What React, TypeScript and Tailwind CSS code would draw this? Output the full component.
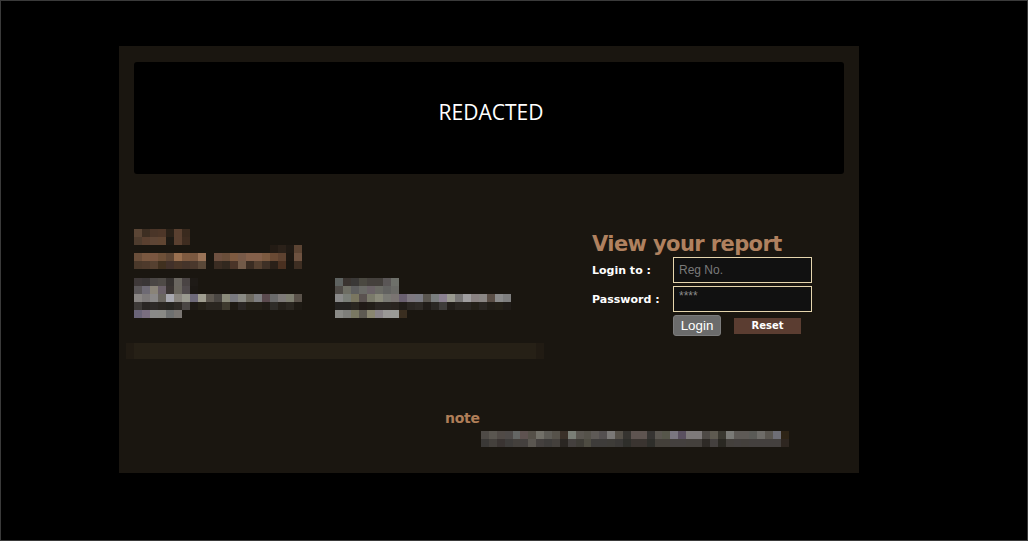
import React from "react";

type Row = string[];

function PixelBlock({ rows, cellW = 8, className = "" }: { rows: Row[]; cellW?: number; className?: string }) {
  return (
    <div className={`flex flex-col ${className}`}>
      {rows.map((row, i) => (
        <div key={i} className="flex h-[8px]">
          {row.map((c, j) => (
            <div key={j} className="h-[8px] shrink-0" style={{ width: cellW, background: c || "transparent" }} />
          ))}
        </div>
      ))}
    </div>
  );
}

const blockA: Row[] = [
  ["#5a4535", "#3d2e22", "#4a3528", "#4d3628", "#2a2118", "#5a4030", "#3a2a1e"],
  ["#4e3c2e", "#5a4030", "#5e4535", "#604532", "#1e1a14", "#5a4030", "#3e2c20"],
];

const t = "";
const blockB: Row[] = [
  [t, t, t, t, t, t, t, t, t, t, t, t, t, t, t, t, t, "#231b14", "#2b2119", "#201a14", "#5c4433"],
  ["#6a4e3a", "#7a5840", "#7a5640", "#6e5038", "#5e4634", "#9a7050", "#7e5a40", "#7a5840", "#9a7458", t,
    "#6e5040", "#6a4e3a", "#7e5a40", "#785a48", "#84604a", "#84604a", "#7c5a40", "#6a4a34", "#5e4230", "#1e1812", "#6e5240"],
  ["#4a382a", "#4e3a2c", "#554030", "#40301f", "#42312a", "#4a3628", "#45342a", "#4a382c", "#5a4838", t,
    "#3a2c22", "#32281f", "#4a3428", "#725a48", "#3a2c22", "#554030", "#3e3026", "#2a2018", "#4a3020", t, "#3e2e22"],
];

const blockC: Row[] = [
  ["#3e3838", "#3a3636", "#4a4644", "#4e4a46", "#363230", "#6a6660", "#4a4444", "#1e1a16"],
  ["#5a5658", "#6e6a74", "#8a8478", "#6a6068", "#3a3432", "#6a665e", "#504a4c", "#1c1814"],
  ["#8a8684", "#7e7a7a", "#8a8888", "#6a6660", "#a8a8b0", "#8a8680", "#9a9a90", "#6e6a7a", "#a09e90", "#5e5850", "#4a4642",
    "#8a8a7a", "#7a7a80", "#8a8a84", "#6e6a60", "#7e7e80", "#5a4a4e", "#6a6a6a", "#7e7a78", "#7e7e70", "#5a524a"],
  ["#3e3a38", "#2a2624", "#2e2a28", "#2a2622", "#262420", "#2e2a26", "#4a4644", "#1e1a16", "#242018", "#2a2620", "#2a2620",
    "#3e3a2e", "#1e1a14", "#2a2624", "#242018", "#242018", "#201c16", "#2e2c28", "#24201a", "#2a2620", "#1e1a14"],
  ["#6a6478", "#7a6e80", "#8a8a88", "#8a8a86", "#6e7070", "#7a7672"],
];

const blockD: Row[] = [
  ["#5e6260", "#3a3430", "#3a3836", "#4a4840", "#44403c", "#44403c", "#5a5656", "#6e706a"],
  ["#504c48", "#6e6e64", "#5e5e5e", "#6a6a66", "#6a6266", "#6a6a64", "#626260", "#6a6a66"],
  ["#8a8a8a", "#7a7e78", "#7a7660", "#5a5250", "#7a7a6a", "#8a8a7a", "#7a7a74", "#7a7472", "#6a6070", "#7e7880", "#7a7a82",
    "#5a5650", "#7a7e7e", "#8a8090", "#9a9a90", "#7a7878", "#a09ea0", "#8a8282", "#8a8684", "#5a4e46", "#8a8a8a", "#7e7e7e"],
  ["#242220", "#242220", "#2a2620", "#201a16", "#221e18", "#2a2622", "#2a2622", "#2a2420", "#201c18", "#2a2622", "#2e2a26",
    "#201c18", "#2a2824", "#3e3c3a", "#221e1a", "#2a2622", "#2a2622", "#242018", "#2a2622", "#221e18", "#242018", "#201c18"],
  ["#8a8a86", "#7e7e7a", "#7a7862", "#5e5a52", "#8a8670", "#8a8488", "#9a9896", "#9a9a96", "#3a2e20"],
];

const noteBlock: Row[] = [
  ["#4e4a46", "#5a5650", "#504a46", "#4e4a48", "#646664", "#5e5250", "#555048", "#727068", "#5e5c56", "#56524a", "#3a3028",
    "#7a7e76", "#5a5650", "#55524a", "#5e5a56", "#545050", "#7a7876", "#555048", "#363430", "#5e5450", "#5e5450", "#363432",
    "#5a5650", "#56564a", "#7a7680", "#5a5060", "#7e7a7a", "#7e7a7a", "#4e4a46", "#5e5a50", "#3a3830", "#7a7a76", "#5e5a56",
    "#5e5a56", "#5a5a56", "#6e6c68", "#5a5650", "#6e6e76", "#2e2416"],
  ["#3a3836", "#44403c", "#3a3432", "#3e3c3a", "#44403c", "#44403e", "#5a5650", "#44403e", "#3e3c3a", "#44403c", "#2a2622",
    "#44403e", "#3e3c36", "#4e4c42", "#3e3c3a", "#3e3c3a", "#3e3c38", "#3a3836", "#2e2e2a", "#3a3430", "#3a3430", "#2e2e2a",
    "#44403a", "#44403a", "#44403e", "#44403e", "#44403c", "#44403c", "#2e2a26", "#44403e", "#2a2822", "#44403c", "#44403e",
    "#44403c", "#44403e", "#44403e", "#44403e", "#44403e", "#2e2620"],
];

function LoginForm() {
  return (
    <div className="flex flex-col font-['DejaVu_Sans',sans-serif]">
      <h2 className="mt-[3px] text-[21px] leading-[24px] font-bold tracking-[-0.6px] text-[#b0815f]">View your report</h2>
      <div className="mt-[1px] flex flex-col gap-[3px]">
        <div className="flex items-center">
          <span className="w-[81px] pt-[2px] text-[11px] font-bold text-white">Login to :</span>
          <input
            placeholder="Reg No."
            className="w-[139px] h-[26px] border border-[#e6d6ae] bg-[#111111] px-[5px] font-['Liberation_Sans',sans-serif] text-[12px] text-white placeholder:text-[#7a7a7a] outline-none"
          />
        </div>
        <div className="flex items-center">
          <span className="w-[81px] pt-[2px] text-[11px] font-bold text-white">Password :</span>
          <input
            type="password"
            placeholder="****"
            className="w-[139px] h-[26px] border border-[#e6d6ae] bg-[#111111] px-[5px] pb-[6px] font-['Liberation_Sans',sans-serif] text-[12px] text-white placeholder:text-[#8a8a8a] outline-none"
          />
        </div>
        <div className="flex items-center pl-[81px] gap-[13px]">
          <button className="w-[48px] h-[21px] rounded-[3px] border border-[#7c7c7c] bg-[#6b6b6b] font-['Liberation_Sans',sans-serif] text-[13.33px] leading-none text-white">
            Login
          </button>
          <button className="w-[67px] h-[16px] bg-[#5b3d31] text-[10px] font-bold leading-none text-white">Reset</button>
        </div>
      </div>
    </div>
  );
}

export default function App() {
  return (
    <div className="h-[541px] w-[1028px] border border-[#3a3a3a] bg-black overflow-hidden">
      <div className="ml-[118px] mt-[45px] w-[740px] h-[427px] bg-[#1a1610] px-[15px] pt-[16px]">
        <div className="h-[112px] rounded-[3px] bg-black flex items-center justify-center pl-[4px] pb-[11px]">
          <span className="font-['Open_Sans',sans-serif] text-[21px] text-white">REDACTED</span>
        </div>

        <div className="mt-[55px] flex">
          <div className="w-[458px] flex flex-col">
            <PixelBlock rows={blockA} />
            <PixelBlock rows={blockB} />
            <div className="mt-[9px] flex">
              <div className="w-[201px]">
                <PixelBlock rows={blockC} />
              </div>
              <PixelBlock rows={blockD} />
            </div>
            <div className="mt-[25px] -ml-[8px] w-[418px] h-[16px] bg-[#211b13] px-[8px]">
              <div className="h-full bg-[#262016]" />
            </div>
          </div>
          <LoginForm />
        </div>

        <div className="mt-[50px] pl-[311px] flex flex-col">
          <span className="font-['DejaVu_Sans',sans-serif] text-[14px] leading-[18px] font-bold tracking-[-0.3px] text-[#b07e58]">note</span>
          <PixelBlock rows={noteBlock} cellW={7.9} className="ml-[36px] mt-[4px]" />
        </div>
      </div>
    </div>
  );
}
